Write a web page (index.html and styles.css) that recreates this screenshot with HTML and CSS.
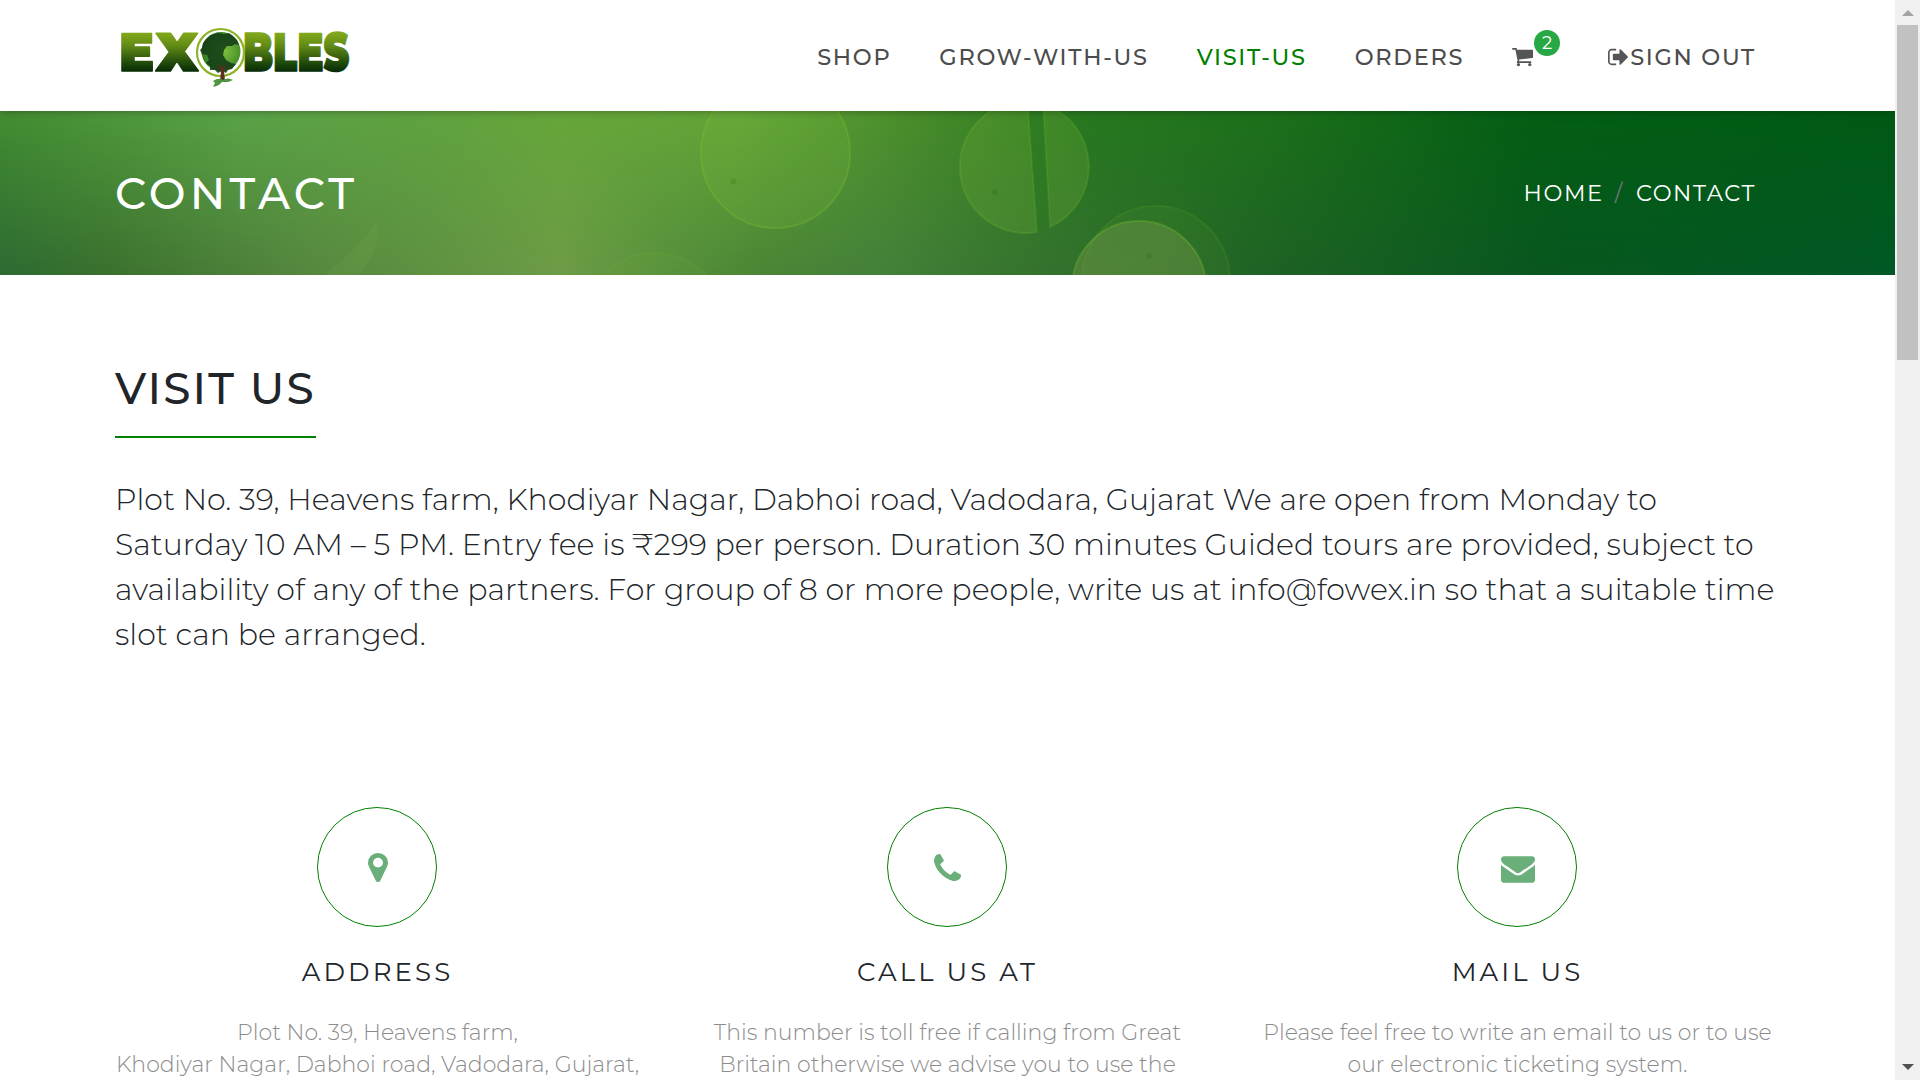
FILE: index.html
```html
<!DOCTYPE html>
<html lang="en">
<head>
<meta charset="utf-8">
<title>Exobles - Contact</title>
<link rel="stylesheet" href="styles.css">
</head>
<body>
<div class="page">
  <header class="header">
    <a class="logo" aria-label="Exobles">
      <svg width="250" height="80" viewBox="0 -4 250 80">
        <defs>
          <linearGradient id="leaf" gradientUnits="userSpaceOnUse" x1="0" y1="12" x2="0" y2="53">
            <stop offset="0" stop-color="#86ad1c"/><stop offset=".35" stop-color="#638c15"/>
            <stop offset=".75" stop-color="#244f0c"/><stop offset="1" stop-color="#062a05"/>
          </linearGradient>
          <radialGradient id="globe" cx=".6" cy=".5" r=".6">
            <stop offset="0" stop-color="#7cbf3c"/><stop offset="1" stop-color="#2f7a22"/>
          </radialGradient>
        </defs>
        <g class="wordmark" fill="url(#leaf)" stroke="url(#leaf)">
          <text x="4" y="51.500" textLength="35" lengthAdjust="spacingAndGlyphs">E</text>
          <text x="41" y="51.500" textLength="42" lengthAdjust="spacingAndGlyphs">X</text>
          <text x="128" y="51.500" textLength="106" lengthAdjust="spacingAndGlyphs">BLES</text>
        </g>
        <circle cx="105.500" cy="33.500" r="23.500" fill="#fff" stroke="#8db428" stroke-width="2.200"/>
        <circle cx="106" cy="32.500" r="19.500" fill="url(#globe)"/>
        <path fill="#143d17" opacity=".88" d="M88 24l3-4 5-4 7-2 6 1 5-1 4 3 4 4 2 5-4-1-3 2-5 0-3 4-1 5 3 5 5 3 5 1-4 5-4 1-2 3-4-2-4 2-3-3-5 0 0-4-4-3 3-3-2-5-5-1-2-4 2-2z"/>
        <path fill="#5a2d1c" d="M105 43l2 6 4-4-2 7 1 10h-5l1-10-5-6 4 2z"/>
        <path fill="#4f9440" d="M98 62q6-4 10-1 5-3 10 0l-5 2-6 0q-3 4-9 5l2-4z"/>
      </svg>
    </a>
    <nav class="nav">
      <a>SHOP</a>
      <a>GROW-WITH-US</a>
      <a class="active">VISIT-US</a>
      <a>ORDERS</a>
      <a class="cart">
        <svg width="21" height="20" viewBox="0 0 1664 1536" preserveAspectRatio="none"><path d="M640 1408q0 52-38 90t-90 38-90-38-38-90 38-90 90-38 90 38 38 90zm896 0q0 52-38 90t-90 38-90-38-38-90 38-90 90-38 90 38 38 90zm128-1088v512q0 24-16.500 42.500t-40.500 21.500l-1044 122q13 60 13 70 0 16-24 64h920q26 0 45 19t19 45-19 45-45 19h-1024q-26 0-45-19t-19-45q0-11 8-31.500t16-36 21.500-40 15.500-29.500l-177-823h-204q-26 0-45-19t-19-45 19-45 45-19h256q16 0 28.500 6.500t19.500 15.500 13 24.500 8 26 5.500 29.500 4.500 26h1201q26 0 45 19t19 45z" transform="translate(0 -128)"/></svg>
        <span class="badge">2</span>
      </a>
      <a class="signout">
        <svg width="20" height="18" viewBox="0 0 1568 1280"><path d="M640 1184q0 4 1 20t.5 26.500-3 23.500-10 19.500-20.500 6.500h-320q-119 0-203.500-84.500t-84.500-203.500v-704q0-119 84.500-203.500t203.500-84.500h320q13 0 22.500 9.500t9.500 22.500q0 4 1 20t.5 26.500-3 23.500-10 19.500-20.500 6.500h-320q-66 0-113 47t-47 113v704q0 66 47 113t113 47h312l11.500 1 11.500 3 8 5.500 7 9 2 13.500zm928-544q0 26-19 45l-544 544q-19 19-45 19t-45-19-19-45v-288h-448q-26 0-45-19t-19-45v-384q0-26 19-45t45-19h448v-288q0-26 19-45t45-19 45 19l544 544q19 19 19 45z"/></svg><span>SIGN OUT</span>
      </a>
    </nav>
  </header>

  <section class="banner">
    <svg class="bokeh" viewBox="0 0 1895 164" width="1895" height="164">
      <g fill="#78b43c" stroke="#7fc22e" stroke-width="2">
        <ellipse cx="775.500" cy="42" rx="74.500" ry="75" fill-opacity=".22" stroke-opacity=".32"/>
        <path d="M1028 -10A66 66 0 1 0 1037 121L1028 0zM1043 -7L1050 116A66 66 0 0 0 1043 -7z" fill-opacity=".24" stroke-opacity=".2"/>
        <circle cx="1156" cy="169" r="74" fill-opacity=".09" stroke-opacity=".13"/>
        <circle cx="1139" cy="177" r="67" fill="#7f9f50" fill-opacity=".36" stroke-opacity=".3"/>
        <circle cx="655" cy="213" r="71" fill-opacity=".1" stroke-opacity=".13"/>
      </g>
      <path d="M1029 0H1043L1050 116L1037 121z" fill="#2a7a20" opacity=".4"/>
      <path d="M325 164Q365 130 377 110Q382 140 357 164z" fill="#7fae50" opacity=".14"/>
      <circle cx="733.500" cy="70.500" r="3" fill="#3d7d25" opacity=".35"/>
      <circle cx="995" cy="81" r="3" fill="#2b6d20" opacity=".3"/>
      <circle cx="1149" cy="145" r="3" fill="#2b6d20" opacity=".3"/>
    </svg>
    <h1>CONTACT</h1>
    <div class="crumbs"><a>HOME</a><span class="slash">/</span><a>CONTACT</a></div>
  </section>

  <main class="content">
    <h2>VISIT US</h2>
    <p class="lead">Plot No. 39, Heavens farm, Khodiyar Nagar, Dabhoi road, Vadodara, Gujarat We are open from Monday to Saturday 10 AM – 5 PM. Entry fee is ₹299 per person. Duration 30 minutes Guided tours are provided, subject to availability of any of the partners. For group of 8 or more people, write us at info@fowex.in so that a suitable time slot can be arranged.</p>
    <div class="columns">
      <section class="box">
        <div class="ring"><svg width="20" height="29" viewBox="0 0 1024 1536" preserveAspectRatio="none"><path d="M768 512q0-106-75-181t-181-75-181 75-75 181 75 181 181 75 181-75 75-181zm256 0q0 109-33 179l-364 774q-16 33-47.500 52t-67.500 19-67.500-19-46.500-52l-365-774q-33-70-33-179 0-212 150-362t362-150 362 150 150 362z"/></svg></div>
        <h3>ADDRESS</h3>
        <p>Plot No. 39, Heavens farm,<br>Khodiyar Nagar, Dabhoi road, Vadodara, Gujarat,</p>
      </section>
      <section class="box">
        <div class="ring"><svg class="phone" width="27" height="27" viewBox="0 0 1408 1408"><path d="M1408 1112q0 27-10 70.500t-21 68.500q-21 50-122 106-94 51-186 51-27 0-53-3.500t-57.500-12.500-47-14.500-55.500-20.500-49-18q-98-35-175-83-127-79-264-216t-216-264q-48-77-83-175-3-9-18-49t-20.500-55.500-14.500-47-12.500-57.500-3.500-53q0-92 51-186 56-101 106-122 25-11 68.500-21t70.500-10q14 0 21 3 18 6 53 76 11 19 30 54t35 63.500 31 53.500q3 4 17.500 25t21.500 35.500 7 28.500q0 20-28.500 50t-62 55-62 53-28.500 46q0 9 5 22.500t8.500 20.500 14 24 11.500 19q76 137 174 235t235 174q2 1 19 11.500t24 14 20.500 8.500 22.500 5q18 0 46-28.500t53-62 55-62 50-28.500q14 0 28.500 7t35.500 21.500 25 17.500q25 15 53.500 31t63.500 35 54 30q70 35 76 53 3 7 3 21z"/></svg></div>
        <h3>CALL US AT</h3>
        <p>This number is toll free if calling from Great<br>Britain otherwise we advise you to use the</p>
      </section>
      <section class="box">
        <div class="ring"><svg class="mail" width="34" height="27" viewBox="0 0 1792 1408"><path d="M1792 454v794q0 66-47 113t-113 47h-1472q-66 0-113-47t-47-113v-794q44 49 101 87 362 246 497 345 57 42 92.500 65.500t94.500 48 110 24.500h2q51 0 110-24.500t94.500-48 92.500-65.500q170-123 498-345 57-39 100-87zm0-294q0 79-49 151t-122 123q-376 261-468 325-10 7-42.500 30.500t-54 38-52 32.500-57.500 27-50 9h-2q-23 0-50-9t-57.500-27-52-32.500-54-38-42.500-30.500q-91-64-262-182.500t-205-142.500q-62-42-117-115.500t-55-136.500q0-78 41.500-130t118.500-52h1472q65 0 112.500 47t47.500 113z"/></svg></div>
        <h3>MAIL US</h3>
        <p>Please feel free to write an email to us or to use<br>our electronic ticketing system.</p>
      </section>
    </div>
  </main>
</div>
<aside class="scrollbar"><i class="up"></i><i class="thumb"></i><i class="down"></i></aside>
</body>
</html>
```
FILE: styles.css
```css
* { box-sizing: border-box; }
body { margin: 0; height: 1080px; display: flex; overflow: hidden; background: #fff; color: #212529; font-family: Montserrat, "Open Sans", sans-serif; }
.page { width: 1895px; height: 1080px; overflow: hidden; }
h1, h2, h3, p { margin: 0; }

.header { position: relative; z-index: 1; height: 111px; padding: 0 139px 0 115px; display: flex; justify-content: space-between; align-items: center; background: #fff; box-shadow: 0 0 8px rgba(0, 0, 0, .35); }
.logo { display: block; height: 80px; margin-top: -2px; }
.logo svg { display: block; overflow: visible; }
.wordmark { font: 900 54px Montserrat, sans-serif; stroke-width: 1.5px; stroke-linejoin: round; }
.nav { display: flex; gap: 48px; align-items: center; margin-top: 3px; font-size: 22.5px; font-weight: 500; letter-spacing: 1.7px; line-height: 28px; color: #4c4c4c; }
.nav svg { display: block; fill: #555; }
.nav .active { color: green; }
.cart { display: flex; width: 48px; position: relative; top: 1px; }
.badge { position: absolute; left: 22px; top: -18px; width: 26px; height: 26px; border-radius: 13px; background: #28a745; color: #fff; font-size: 18px; font-weight: 400; line-height: 27px; letter-spacing: 0; text-align: center; }
.signout { display: flex; align-items: center; gap: 2px; }

.banner { position: relative; height: 164px; padding: 2px 139px 0 115px; display: flex; justify-content: space-between; align-items: center; color: #fff; background: linear-gradient(90deg, #438d31 0, #5aa347 240px, #5fa340 420px, #66a63a 560px, #62a538 740px, #4b8f2b 900px, #27781f 1090px, #1c701a 1280px, #045f14 1520px, #005a14 1895px); }
.banner::before { content: ""; position: absolute; inset: 0; background: linear-gradient(90deg, #2c6a33 0, #3b702e 110px, #56873f 310px, #5f9142 430px, #6d9b46 560px, #568f3c 670px, #4a8535 760px, #44803a 880px, #387530 1000px, #2b6b2a 1160px, #1e6125 1280px, #07561f 1560px, #005825 1895px); -webkit-mask-image: linear-gradient(transparent, #000); mask-image: linear-gradient(transparent, #000); }
.bokeh { position: absolute; left: 0; top: 0; }
.banner h1, .crumbs { position: relative; }
.banner h1 { font-size: 43.75px; font-weight: 500; letter-spacing: 4.2px; line-height: 54px; }
.crumbs { display: flex; margin-top: -2px; font-size: 22.5px; letter-spacing: 1.6px; line-height: 28px; }
.slash { margin: 0 12px 0 11px; color: #6c757d; }

.content { padding: 86px 115px 0; }
.content h2 { width: fit-content; height: 77px; padding-top: 1px; border-bottom: 2px solid green; font-size: 43.75px; font-weight: 500; letter-spacing: 2.1px; line-height: 54px; }
.lead { margin-top: 39px; width: 1665px; font-size: 30px; font-weight: 300; letter-spacing: .025px; line-height: 45px; }
.columns { display: grid; grid-template-columns: repeat(3, 525px); column-gap: 45px; margin-top: 150px; }
.box { display: flex; flex-direction: column; align-items: center; text-align: center; }
.ring { width: 120px; height: 120px; margin-right: 1px; border: 1px solid green; border-radius: 50%; display: flex; align-items: center; justify-content: center; }
.ring svg { margin-left: 1px; fill: #6aae7a; }
.ring .mail { margin-top: 4px; }
.box h3 { margin-top: 28px; font-size: 26px; font-weight: 400; letter-spacing: 3.1px; line-height: 34px; }
.box p { margin-top: 28px; font-size: 22px; font-weight: 300; line-height: 32px; color: #8c8c8c; white-space: nowrap; }

.scrollbar { width: 25px; height: 1080px; display: flex; flex-direction: column; align-items: center; background: #f0f0f0; }
.up, .down { width: 12px; height: 6px; border: 6px solid transparent; }
.up { margin: 10px 0 9px; border-top-width: 0; border-bottom-color: #a3a3a3; }
.thumb { width: 21px; height: 335px; background: #c1c1c1; }
.down { margin: auto 0 10px; border-bottom-width: 0; border-top-color: #505050; }
```
